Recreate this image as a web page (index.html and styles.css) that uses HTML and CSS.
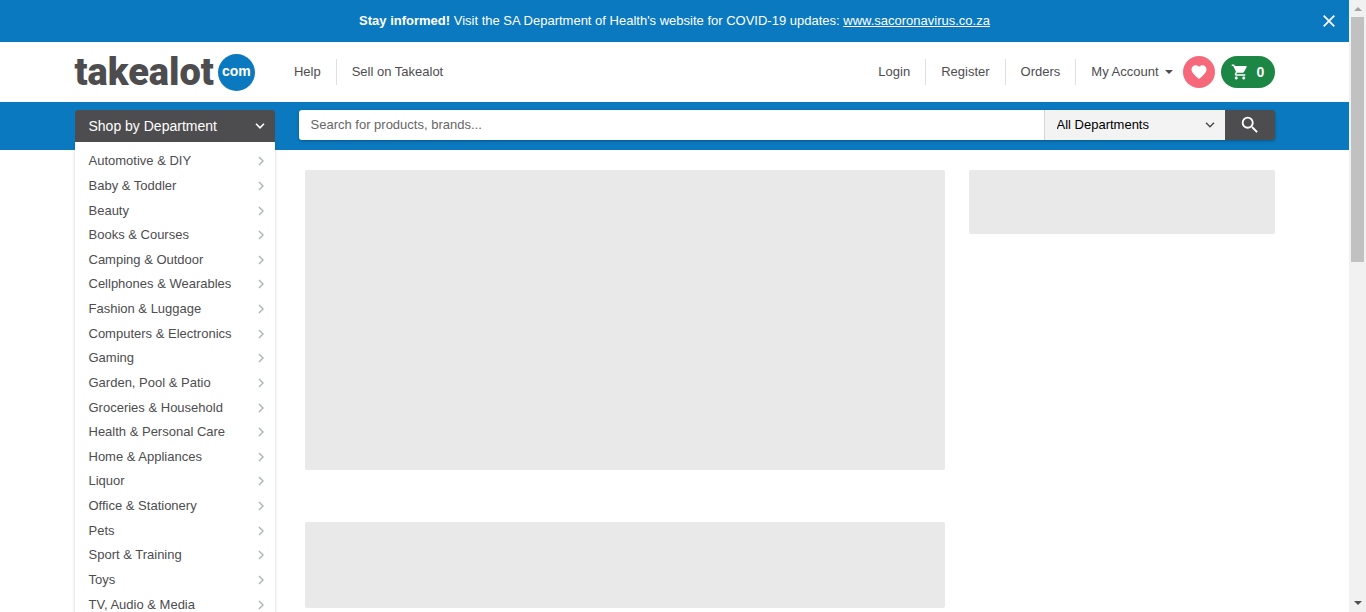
FILE: index.html
```
<!DOCTYPE html>
<html lang="en">
<head>
<meta charset="utf-8">
<title>Takealot.com</title>
<link rel="stylesheet" href="styles.css">
</head>
<body>
<div class="page">
  <div class="notice">
    <p class="notice-text"><strong>Stay informed!</strong> Visit the SA Department of Health's website for COVID-19 updates: <a href="#">www.sacoronavirus.co.za</a></p>
    <button class="notice-close" type="button" aria-label="Close">
      <svg width="12" height="12" viewBox="0 0 12 12" fill="none" stroke="currentColor" stroke-width="1.7"><path d="M.7.7l10.6 10.6M11.3.7L.7 11.3"/></svg>
    </button>
  </div>

  <header class="container header">
    <a class="logo" href="#"><span class="logo-word">takealot</span><span class="logo-dot">com</span></a>
    <nav class="links">
      <a href="#">Help</a>
      <a href="#">Sell on Takealot</a>
    </nav>
    <nav class="links account">
      <a href="#">Login</a>
      <a href="#">Register</a>
      <a href="#">Orders</a>
      <button class="my-account" type="button">My Account
        <svg width="8" height="4" viewBox="0 0 8 4" fill="currentColor"><path d="M0 0h8L4 4z"/></svg>
      </button>
    </nav>
    <a class="wishlist" href="#" aria-label="Wishlist">
      <svg width="18" height="18" viewBox="0 0 24 24" fill="currentColor"><path d="M12 21.35l-1.45-1.32C5.4 15.36 2 12.28 2 8.5 2 5.42 4.42 3 7.5 3c1.74 0 3.41.81 4.5 2.09C13.09 3.81 14.76 3 16.5 3 19.58 3 22 5.42 22 8.5c0 3.78-3.4 6.86-8.55 11.54L12 21.35z"/></svg>
    </a>
    <a class="cart" href="#" aria-label="Cart">
      <svg width="18" height="18" viewBox="0 0 24 24" fill="currentColor"><path d="M7 18c-1.1 0-1.99.9-1.99 2S5.9 22 7 22s2-.9 2-2-.9-2-2-2zM1 2v2h2l3.6 7.59-1.35 2.45c-.16.28-.25.61-.25.96 0 1.1.9 2 2 2h12v-2H7.42c-.14 0-.25-.11-.25-.25l.03-.12.9-1.63h7.45c.75 0 1.41-.41 1.75-1.03l3.58-6.49A1 1 0 0 0 20.25 4H5.21l-.94-2H1zm16 16c-1.1 0-1.99.9-1.99 2s.89 2 1.99 2 2-.9 2-2-.9-2-2-2z"/></svg>
      <span>0</span>
    </a>
  </header>

  <div class="bar">
    <div class="container bar-inner">
      <button class="shop" type="button">Shop by Department
        <svg width="10" height="6" viewBox="0 0 10 6" fill="none" stroke="currentColor" stroke-width="1.6"><path d="M1 .8l4 4 4-4"/></svg>
      </button>
      <form class="search">
        <input class="search-text" type="text" placeholder="Search for products, brands..." aria-label="Search for products, brands">
        <div class="search-dept">
          <select aria-label="Department"><option>All Departments</option></select>
          <svg class="search-arrow" width="10" height="6" viewBox="0 0 10 6" fill="none" stroke="currentColor" stroke-width="1.5"><path d="M1 .8l4 4 4-4"/></svg>
        </div>
        <button class="search-go" type="button" aria-label="Search">
          <svg width="22" height="22" viewBox="0 0 24 24" fill="currentColor"><path d="M15.5 14h-.79l-.28-.27A6.47 6.47 0 0 0 16 9.5 6.5 6.5 0 1 0 9.5 16c1.61 0 3.09-.59 4.23-1.57l.27.28v.79l5 4.99L20.49 19l-4.99-5zm-6 0C7.01 14 5 11.99 5 9.5S7.01 5 9.5 5 14 7.01 14 9.5 11.99 14 9.5 14z"/></svg>
        </button>
      </form>
    </div>
  </div>

  <svg class="defs" width="0" height="0" aria-hidden="true"><symbol id="chev" viewBox="0 0 6 10"><path d="M1 1l4 4-4 4" fill="none" stroke="currentColor" stroke-width="1.4"/></symbol></svg>
  <div class="container content">
    <nav class="menu">
      <ul>
        <li><a href="#">Automotive &amp; DIY<svg><use href="#chev"/></svg></a></li>
        <li><a href="#">Baby &amp; Toddler<svg><use href="#chev"/></svg></a></li>
        <li><a href="#">Beauty<svg><use href="#chev"/></svg></a></li>
        <li><a href="#">Books &amp; Courses<svg><use href="#chev"/></svg></a></li>
        <li><a href="#">Camping &amp; Outdoor<svg><use href="#chev"/></svg></a></li>
        <li><a href="#">Cellphones &amp; Wearables<svg><use href="#chev"/></svg></a></li>
        <li><a href="#">Fashion &amp; Luggage<svg><use href="#chev"/></svg></a></li>
        <li><a href="#">Computers &amp; Electronics<svg><use href="#chev"/></svg></a></li>
        <li><a href="#">Gaming<svg><use href="#chev"/></svg></a></li>
        <li><a href="#">Garden, Pool &amp; Patio<svg><use href="#chev"/></svg></a></li>
        <li><a href="#">Groceries &amp; Household<svg><use href="#chev"/></svg></a></li>
        <li><a href="#">Health &amp; Personal Care<svg><use href="#chev"/></svg></a></li>
        <li><a href="#">Home &amp; Appliances<svg><use href="#chev"/></svg></a></li>
        <li><a href="#">Liquor<svg><use href="#chev"/></svg></a></li>
        <li><a href="#">Office &amp; Stationery<svg><use href="#chev"/></svg></a></li>
        <li><a href="#">Pets<svg><use href="#chev"/></svg></a></li>
        <li><a href="#">Sport &amp; Training<svg><use href="#chev"/></svg></a></li>
        <li><a href="#">Toys<svg><use href="#chev"/></svg></a></li>
        <li><a href="#">TV, Audio &amp; Media<svg><use href="#chev"/></svg></a></li>
      </ul>
    </nav>
    <main class="feed">
      <div class="ghost ghost-hero"></div>
      <div class="ghost ghost-row"></div>
    </main>
    <aside class="side">
      <div class="ghost ghost-side"></div>
    </aside>
  </div>
</div>
<div class="scroll" aria-hidden="true">
  <svg class="scroll-up" width="8" height="4" viewBox="0 0 8 4"><path d="M0 4h8L4 0z" fill="currentColor"/></svg>
  <div class="scroll-thumb"></div>
  <svg class="scroll-down" width="8" height="4" viewBox="0 0 8 4"><path d="M0 0h8L4 4z" fill="currentColor"/></svg>
</div>
</body>
</html>
```

FILE: styles.css
```
* { box-sizing: border-box; }
body {
  margin: 0;
  display: flex;
  height: 100vh;
  overflow: hidden;
  background: #fff;
  color: #4d4d4f;
  font: 13px/16px "Liberation Sans", Arial, sans-serif;
}
a { color: inherit; text-decoration: none; }
button, input, select { font: inherit; color: inherit; border: 0; margin: 0; padding: 0; background: none; }
svg { flex: none; display: block; }
.defs { position: absolute; }
.page { flex: 1; min-width: 0; overflow: hidden; }
.container { max-width: 1200px; margin: 0 auto; }

.notice {
  display: flex;
  align-items: center;
  height: 42px;
  padding-left: 40px;
  background: #0b79bf;
  color: #fff;
  text-align: center;
}
.notice-text { flex: 1; margin: 0; }
.notice-text a { text-decoration: underline; }
.notice-close { display: grid; place-items: center; width: 40px; height: 40px; }

.header { display: flex; align-items: center; height: 60px; }
.logo { display: flex; align-items: center; gap: 4px; }
.logo-word { font: 900 38px/44px Roboto, sans-serif; }
.logo-dot {
  width: 37px;
  height: 37px;
  border-radius: 50%;
  background: #0b79bf;
  color: #fff;
  font-size: 14px;
  font-weight: bold;
  line-height: 34px;
  text-align: center;
}
.links { display: flex; align-items: center; margin-left: 24px; }
.links > * { padding: 5px 15px; border-left: 1px solid #e0e0e0; }
.links > :first-child { border-left: 0; }
.account { margin-left: auto; }
.links .my-account { display: flex; align-items: center; gap: 6px; padding-right: 10px; }
.wishlist, .cart { display: flex; align-items: center; justify-content: center; height: 32px; border-radius: 16px; color: #fff; }
.wishlist { width: 32px; background: #f5697b; }
.cart { width: 54px; margin-left: 6px; gap: 8px; background: #1c8644; font-size: 14px; font-weight: bold; }

.bar { background: #0b79bf; height: 48px; padding-top: 8px; }
.bar-inner { display: flex; align-items: flex-start; gap: 24px; }
.shop {
  display: flex;
  align-items: center;
  justify-content: space-between;
  width: 200px;
  height: 32px;
  padding: 0 10px 0 14px;
  border-radius: 3px 3px 0 0;
  background: #4d4d4f;
  color: #fff;
  font-size: 14px;
}
.search { display: flex; flex: 1; height: 30px; border-radius: 3px; overflow: hidden; box-shadow: 0 1px 3px rgba(0, 0, 0, .3); }
.search-text { flex: 1; min-width: 0; padding: 0 12px; background: #fff; }
.search-text::placeholder { color: #666; opacity: 1; }
.search-dept { position: relative; width: 181px; border-left: 1px solid #d5d5d5; background: #f3f3f3; }
.search-dept select { appearance: none; width: 100%; height: 100%; padding: 0 12px; color: #000; }
.search-arrow { position: absolute; right: 10px; top: 12px; pointer-events: none; }
.search-go { display: grid; place-items: center; width: 50px; background: #4d4d4f; color: #fff; }

.content { display: grid; grid-template-columns: 200px 1fr 306px; align-items: start; }
.menu { position: relative; margin-top: -8px; padding: 7px 0; background: #fff; box-shadow: 0 1px 3px rgba(0, 0, 0, .2); clip-path: inset(0 -6px -6px -6px); }
.menu ul { display: flex; flex-direction: column; height: 468px; margin: 0; padding: 0; list-style: none; }
.menu li { flex: 1; min-height: 0; }
.menu a { display: flex; align-items: center; justify-content: space-between; height: 100%; padding: 0 11px 0 14px; }
.menu svg { width: 6px; height: 10px; color: #a9b5b5; }
.feed { display: grid; gap: 52px; padding: 20px 24px 0 30px; }
.side { padding-top: 20px; }
.ghost { border-radius: 2px; background: #e9e9e9; }
.ghost-hero { height: 300px; }
.ghost-row { height: 86px; }
.ghost-side { height: 64px; }

.scroll { display: flex; flex-direction: column; align-items: center; width: 17px; padding: 7px 0; background: #f1f1f1; }
.scroll-up { color: #a3a3a3; }
.scroll-thumb { width: 13px; height: 41%; margin-top: 6px; background: #c1c1c1; }
.scroll-down { margin-top: auto; color: #505050; }
```
